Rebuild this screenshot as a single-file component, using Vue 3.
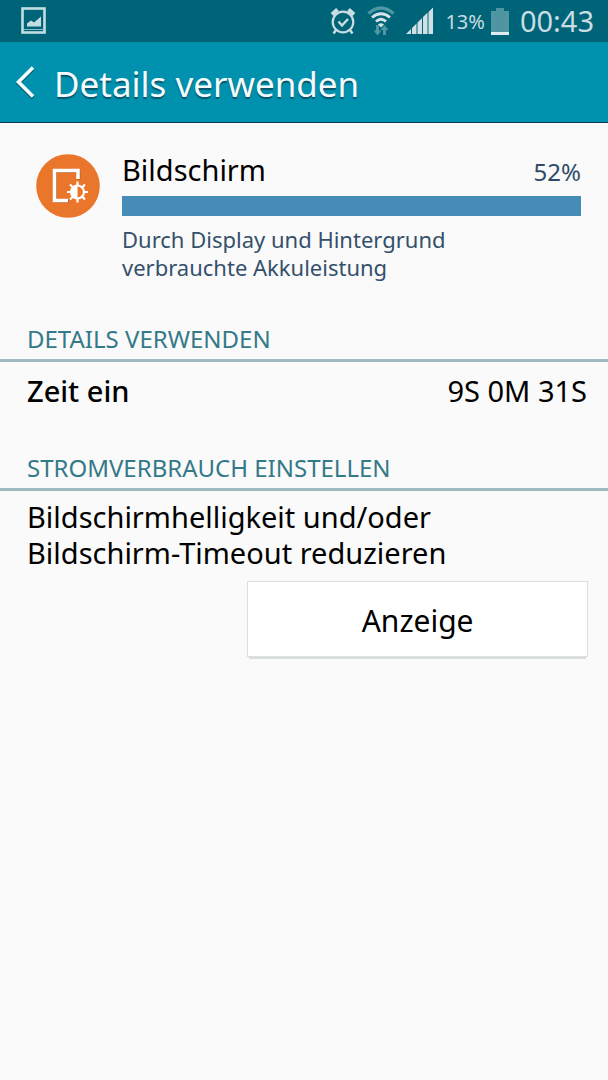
<script setup>
const usage = { name: 'Bildschirm', percent: '52%', fill: 100 }
</script>

<template>
  <div class="screen">
    <div class="status">
      <svg class="picture" width="26" height="28" viewBox="0 0 26 28" aria-hidden="true">
        <rect x="1.5" y="1.5" width="22" height="24" fill="none" stroke="#c3dee3" stroke-width="2.6" />
        <path d="M3 22.5h19" stroke="#8bb9c2" stroke-width="1" />
        <path d="M6 19.5v-3l4-3 3 2 7-6v10z" fill="#c3dee3" />
      </svg>
      <div class="indicators">
        <svg width="26" height="28" viewBox="0 0 26 28" fill="none" stroke="#c9dde2" stroke-width="2.2" aria-hidden="true">
          <circle cx="13" cy="15" r="10.300" />
          <path d="M8.5 14.5l3.5 4 6-6.500" stroke-width="2.4" />
          <path d="M2 7.500l5.500-5M24 7.500l-5.500-5" stroke-width="4" />
          <path d="M6 23l-2.500 3.500M20 23l2.500 3.500" stroke-width="2.400" />
        </svg>
        <svg width="28" height="30" viewBox="0 0 28 30" fill="none" aria-hidden="true">
          <path d="M1.500 7.500q12.500-11 25 0" stroke="#4e96a3" stroke-width="3.500" />
          <path d="M5 11.500q9-7.500 18 0M9 15.500q5-4.500 10 0" stroke="#d5e5e8" stroke-width="2.800" />
          <path d="M11 18.500q3-2.500 6 0l-3 3z" fill="#d5e5e8" />
          <path d="M10.500 19v7M17.500 29v-7" stroke="#4e96a3" stroke-width="3" />
          <path d="M6.500 24.500h8l-4 5zM13.500 24h8l-4-5z" fill="#4e96a3" />
        </svg>
        <svg width="28" height="28" viewBox="0 0 28 28" fill="#d0e1e5" aria-hidden="true">
          <path d="M0 27l5-5v5zM6 21l4.500-4.500v10.500h-4.500zM11.500 15.500l4.500-4.500v16h-4.500zM17 10l4.500-4.500v21.500h-4.500zM22.500 5l4.500-4.500v26.500h-4.500z" />
        </svg>
        <span class="charge">13%</span>
        <svg width="18" height="27" viewBox="0 0 18 27" aria-hidden="true">
          <path d="M0 3h5V0h8v3h5v24H0z" fill="#4f95a2" />
          <path d="M0 24h18v3H0z" fill="#e0ebed" />
        </svg>
        <span class="clock">00:43</span>
      </div>
    </div>

    <header class="bar">
      <button class="back" type="button" aria-label="Zurück">
        <svg width="22" height="34" viewBox="0 0 22 34" fill="none" stroke-width="3.600" aria-hidden="true">
          <path d="M19 4L4.500 18.500 19 33" stroke="#06566b" />
          <path d="M19 2.500L4.500 17 19 31.500" stroke="#f5fbfc" />
        </svg>
      </button>
      <h1>Details verwenden</h1>
    </header>

    <main>
      <section class="summary">
        <svg class="badge" width="64" height="64" viewBox="0 0 64 64" fill="none" aria-hidden="true">
          <circle cx="32" cy="32" r="31.800" fill="#e9762b" />
          <path d="M42 25v-8.500H18.500V46.500H32" stroke="#b9662f" stroke-width="3" transform="translate(1 1)" />
          <path d="M42 25v-8.500H18.500V46.500H32" stroke="#fff" stroke-width="3.500" />
          <g stroke="#fff">
            <path d="M41.500 27.500v4M41.500 44.500v4M31 38h4M48 38h4M34 30.500l3 3M46 42.500l3 3M34 45.500l3-3M46 33.500l3-3" stroke-width="2.200" />
            <circle cx="41.500" cy="38" r="6.500" stroke-width="2.200" />
          </g>
          <path d="M41.500 31.500a6.500 6.500 0 0 0 0 13z" fill="#fff" />
        </svg>
        <div class="info">
          <div class="heading">
            <h2>{{ usage.name }}</h2>
            <span class="percent">{{ usage.percent }}</span>
          </div>
          <div class="track"><div class="fill" :style="{ width: usage.fill + '%' }"></div></div>
          <p class="note">Durch Display und Hintergrund verbrauchte Akkuleistung</p>
        </div>
      </section>

      <section>
        <h3>DETAILS VERWENDEN</h3>
        <dl class="row">
          <dt>Zeit ein</dt>
          <dd>9S 0M 31S</dd>
        </dl>
      </section>

      <section>
        <h3>STROMVERBRAUCH EINSTELLEN</h3>
        <p class="hint">Bildschirmhelligkeit und/oder Bildschirm-Timeout reduzieren</p>
        <div class="actions">
          <button class="action" type="button">Anzeige</button>
        </div>
      </section>
    </main>
  </div>
</template>

<style>
body {
  margin: 0;
  background: #fafafa;
}
</style>

<style scoped>
.screen {
  min-height: 100vh;
  background: #fafafa;
  color: #000;
  font-family: "Noto Sans", "Open Sans", sans-serif;
  font-size: 29px;
}
h1, h2, h3, p, dl, dd {
  margin: 0;
  font-weight: 400;
}
button {
  font: inherit;
  color: inherit;
  cursor: pointer;
}
svg {
  display: block;
  flex: none;
}
.status {
  display: flex;
  align-items: center;
  justify-content: space-between;
  height: 42px;
  padding: 0 14px 0 21px;
  background: #006478;
  color: #c9dde2;
}
.indicators {
  display: flex;
  align-items: center;
  gap: 11px;
}
.charge {
  font-size: 20px;
  margin-right: -5px;
}
.clock {
  font-size: 29px;
  line-height: 40px;
}
.bar {
  display: flex;
  align-items: center;
  height: 80px;
  background: #0091ae;
  border-bottom: 1px solid #053f54;
  color: #f5fbfc;
}
.back {
  display: flex;
  border: 0;
  padding: 0 18px 0 14px;
  background: none;
}
h1 {
  padding-top: 4px;
  font-size: 35px;
  line-height: 48px;
  text-shadow: 0 2px 1px #06566b;
}
.summary {
  display: flex;
  gap: 22px;
  padding: 29px 27px 0 36px;
}
.badge {
  margin-top: 2px;
}
.info {
  flex: 1;
}
.heading {
  display: flex;
  align-items: baseline;
  justify-content: space-between;
  line-height: 36px;
}
h2 {
  font-size: 29px;
}
.percent {
  font-size: 24px;
  color: #2f4a66;
}
.track {
  height: 20px;
  margin-top: 6px;
}
.fill {
  height: 100%;
  background: #468cb8;
}
.note {
  max-width: 360px;
  margin-top: 9px;
  font-size: 22px;
  line-height: 28px;
  color: #34506b;
}
h3 {
  padding: 0 27px 2px;
  border-bottom: 3px solid #9fb9bf;
  font-size: 24px;
  line-height: 36px;
  color: #347988;
}
section + section {
  margin-top: 38px;
}
.summary + section {
  margin-top: 40px;
}
.row {
  display: flex;
  justify-content: space-between;
  padding: 8px 21px 0 27px;
  font-size: 29px;
  line-height: 42px;
}
dt {
  font-weight: 500;
}
.hint {
  max-width: 460px;
  padding: 8px 27px 0;
  font-size: 29px;
  line-height: 36px;
}
.actions {
  display: flex;
  justify-content: flex-end;
  padding: 10px 20px 0;
}
.action {
  width: 60%;
  height: 76px;
  padding: 2px 0 0;
  border: 1px solid #dcdfdf;
  background: #fff;
  font-size: 30px;
  box-shadow: 0 4px 0 -2px #d8dede;
}
</style>
